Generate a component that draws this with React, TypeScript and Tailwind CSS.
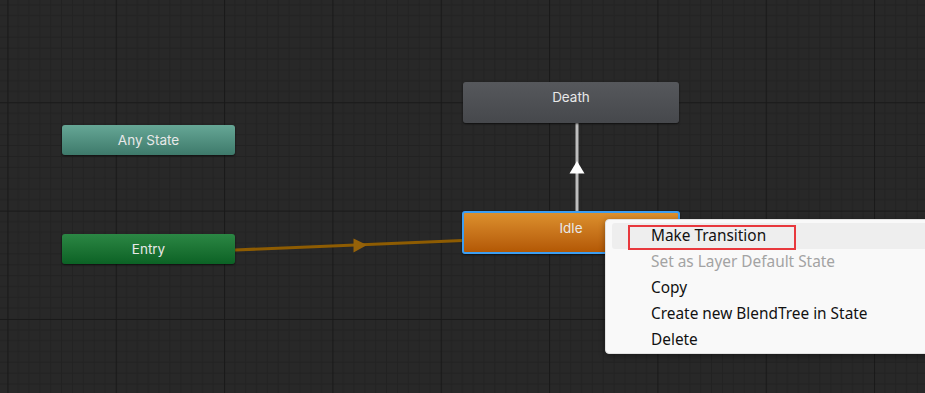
import React from 'react'

const MENU_ITEMS = [
  { label: 'Make Transition', disabled: false, active: true },
  { label: 'Set as Layer Default State', disabled: true, active: false },
  { label: 'Copy', disabled: false, active: false },
  { label: 'Create new BlendTree in State', disabled: false, active: false },
  { label: 'Delete', disabled: false, active: false },
]

function GridAndEdges() {
  const minor = Array.from({ length: 9 }, (_, i) => (i + 1) * 10.833)
  return (
    <svg className="absolute inset-0" width="925" height="393">
      <defs>
        <pattern id="grid" patternUnits="userSpaceOnUse" x="7.4" y="102.3" width="108.33" height="108.33">
          <rect width="108.33" height="108.33" fill="#282828" />
          {minor.map(p => (
            <g key={p}>
              <line x1={p} y1="0" x2={p} y2="108.33" stroke="#222222" strokeWidth="1" />
              <line x1="0" y1={p} x2="108.33" y2={p} stroke="#222222" strokeWidth="1" />
            </g>
          ))}
          <line x1="0.5" y1="0" x2="0.5" y2="108.33" stroke="#191919" strokeWidth="1.2" />
          <line x1="0" y1="0.5" x2="108.33" y2="0.5" stroke="#191919" strokeWidth="1.2" />
        </pattern>
      </defs>
      <rect width="925" height="393" fill="url(#grid)" />

      {/* Idle -> Death */}
      <line x1="577" y1="123" x2="577" y2="212" stroke="#bdbdbd" strokeWidth="3" />
      <polygon points="577,161 569.5,173.5 584.5,173.5" fill="#ffffff" />

      {/* Entry -> Idle */}
      <line x1="235" y1="250" x2="463" y2="240.5" stroke="#8e5c02" strokeWidth="3" />
      <polygon points="353.5,238.5 353.5,252.5 367,245" fill="#95620a" />
    </svg>
  )
}

function StateNode({
  label,
  className,
  tall,
}: {
  label: string
  className: string
  tall?: boolean
}) {
  return (
    <div
      className={`absolute flex justify-center rounded-[3px] text-[13.5px] text-[#e8e8e8] shadow-[0_1px_2px_rgba(0,0,0,0.6)] ${
        tall ? 'items-start pt-[5px]' : 'items-center'
      } ${className}`}
      style={{ fontFamily: 'Inter, "Noto Sans", sans-serif' }}
    >
      {label}
    </div>
  )
}

export default function App() {
  return (
    <div className="relative w-[925px] h-[393px] overflow-hidden bg-[#282828]">
      <GridAndEdges />

      <StateNode label="Any State" className="left-[62px] top-[125px] w-[173px] h-[30px] bg-gradient-to-b from-[#66a796] to-[#3e7a6b]" />
      <StateNode label="Entry" className="left-[62px] top-[234px] w-[173px] h-[30px] bg-gradient-to-b from-[#2b8744] to-[#0b6225]" />
      <StateNode label="Death" tall className="left-[463px] top-[82px] w-[216px] h-[41px] bg-gradient-to-b from-[#56585c] to-[#46484c]" />
      <StateNode
        label="Idle"
        tall
        className="left-[462px] top-[211px] w-[218px] h-[43px] border-2 border-[#3d9ef2] bg-gradient-to-b from-[#dc902d] to-[#b35804] shadow-[0_0_7px_3px_rgba(40,140,240,0.55)]"
      />

      {/* context menu */}
      <div
        className="absolute left-[605px] top-[219px] w-[330px] h-[135px] rounded-[4px] bg-[#f9f9f9] border border-[#e2e2e2] pt-[3px] shadow-[0_2px_6px_rgba(0,0,0,0.35)]"
        style={{ fontFamily: '"Noto Sans", "Open Sans", sans-serif' }}
      >
        {MENU_ITEMS.map(item => (
          <div
            key={item.label}
            className={`relative flex items-center h-[26px] ml-[6px] pl-[39px] rounded-[3px] text-[15.4px] ${
              item.active ? 'bg-[#eeeeee]' : ''
            } ${item.disabled ? 'text-[#a3a3a3]' : 'text-[#111111]'}`}
          >
            {item.active && (
              <div className="absolute left-[16px] top-[2px] w-[168px] h-[25px] border-2 border-[#e8383d]" />
            )}
            <span className="relative">{item.label}</span>
          </div>
        ))}
      </div>
    </div>
  )
}
